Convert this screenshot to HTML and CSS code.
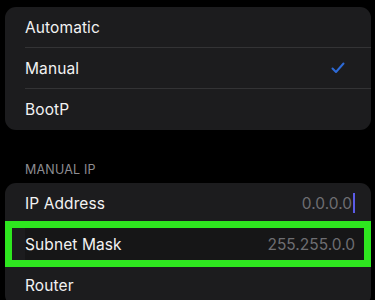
FILE: index.html
```html
<!DOCTYPE html>
<html lang="en">
<head>
    <meta charset="UTF-8">
    <meta name="viewport" content="width=device-width, initial-scale=1.0">
    <title>Configure IPv4</title>
    <link rel="stylesheet" href="styles.css">
</head>
<body>
    <div class="screen">
        <div class="group">
            <div class="row">
                <span class="label">Automatic</span>
            </div>
            <div class="row">
                <span class="label">Manual</span>
                <svg class="check" width="14" height="12" viewBox="0 0 14 12">
                    <path d="M1.5 6.5 L5 10 L12.5 1.5" fill="none" stroke="#2d6ad6" stroke-width="2" stroke-linecap="round" stroke-linejoin="round"/>
                </svg>
            </div>
            <div class="row">
                <span class="label">BootP</span>
            </div>
        </div>

        <div class="section-title">MANUAL IP</div>

        <div class="group">
            <div class="row">
                <span class="label">IP Address</span>
                <span class="value">0.0.0.0<span class="cursor"></span></span>
            </div>
            <div class="row highlighted">
                <span class="label">Subnet Mask</span>
                <span class="value">255.255.0.0</span>
            </div>
            <div class="row">
                <span class="label">Router</span>
            </div>
        </div>
    </div>
</body>
</html>
```

FILE: styles.css
```css
:root {
    --bg: #000000;
    --card: #1c1c1e;
    --separator: #333335;
    --text: #f2f2f2;
    --muted: #6e6e72;
    --highlight: #2ee61f;
}

body {
    margin: 0;
    background-color: var(--bg);
    font-family: 'Inter', 'Noto Sans', sans-serif;
    color: var(--text);
}

.screen {
    padding: 7px 4px 0 5px;
}

.group {
    background-color: var(--card);
    border-radius: 11px;
    padding-left: 20px;
}

.row {
    position: relative;
    display: flex;
    align-items: center;
    justify-content: space-between;
    height: 41px;
    padding-right: 16px;
    border-bottom: 1px solid var(--separator);
    box-sizing: border-box;
    height: 41px;
}

.row:last-child {
    border-bottom: none;
}

.label {
    font-size: 15.5px;
    letter-spacing: 0.1px;
}

.check {
    margin-right: 10px;
}

.value {
    display: flex;
    align-items: center;
    font-size: 15.5px;
    color: var(--muted);
}

.cursor {
    display: inline-block;
    width: 2px;
    height: 20px;
    margin-left: 1px;
    background-color: #5b5be6;
}

.section-title {
    padding: 32px 0 6px 20px;
    font-size: 12.5px;
    letter-spacing: 0.2px;
    color: #8d8d92;
}

.highlighted {
    background-color: #161617;
}

.highlighted::after {
    content: "";
    position: absolute;
    top: -3px;
    bottom: -3px;
    left: -20px;
    right: 0;
    border: 7px solid var(--highlight);
}
```
